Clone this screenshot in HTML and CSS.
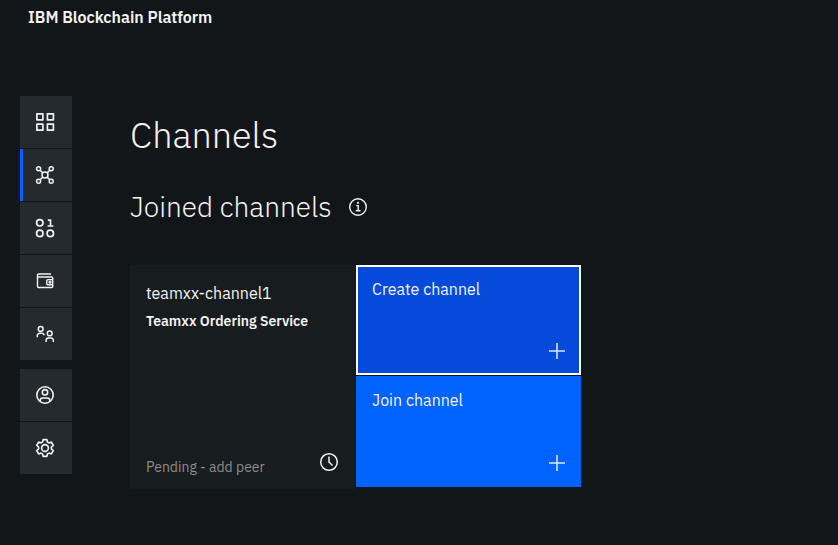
FILE: index.html
```html
<!DOCTYPE html>
<html lang="en">
<head>
<meta charset="utf-8">
<title>IBM Blockchain Platform</title>
<meta name="viewport" content="width=device-width, initial-scale=1">
<link rel="stylesheet" href="styles.css">
</head>
<body>
<header class="header"><a class="brand" href="#">IBM Blockchain Platform</a></header>
<div class="shell">
  <nav class="sidebar" aria-label="Main">
    <div class="nav-group">
      <a class="nav-link" href="#" aria-label="Dashboard">
        <svg class="icon" viewBox="0 0 20 20" stroke-width="1.7"><path d="M1.9 1.8h6v6h-6zM12.4 1.8h6v6h-6zM1.9 12.2h6v6h-6zM12.4 12.2h6v6h-6z" stroke-linejoin="round"/></svg>
      </a>
      <a class="nav-link active" href="#" aria-label="Channels" aria-current="page">
        <svg class="icon" viewBox="0 0 20 20" stroke-width="1.5"><circle cx="10" cy="10" r="3"/><circle cx="3.6" cy="3.8" r="2"/><circle cx="16.2" cy="3.8" r="2"/><circle cx="3.6" cy="16.2" r="2"/><circle cx="16.2" cy="16.2" r="2"/><path d="M5 5.2l2.9 2.7M14.8 5.2l-2.7 2.7M5 14.8l2.9-2.7M14.8 14.8l-2.7-2.7"/></svg>
      </a>
      <a class="nav-link" href="#" aria-label="Smart contracts">
        <svg class="icon" viewBox="0 0 20 20" stroke-width="1.7"><circle cx="4.8" cy="4.8" r="3.2"/><circle cx="4.8" cy="15.4" r="3.2"/><circle cx="15.3" cy="15.4" r="3.2"/><path d="M12.8 2.2h2.7v5.8M12.6 8h5.8"/></svg>
      </a>
      <a class="nav-link" href="#" aria-label="Wallet">
        <svg class="icon" viewBox="0 0 20 20" stroke-width="1.4"><path d="M16 3H3.5a1 1 0 0 0-1 1v11.5a1 1 0 0 0 1 1h13.2a1 1 0 0 0 1-1V7a1 1 0 0 0-1-1H2.5M17.7 8.6h-4.9a1 1 0 0 0-1 1v3.2a1 1 0 0 0 1 1h4.9"/><circle cx="15" cy="11.2" r=".9"/></svg>
      </a>
      <a class="nav-link" href="#" aria-label="Organizations">
        <svg class="icon" viewBox="0 0 20 20" stroke-width="1.5"><circle cx="5.7" cy="4.9" r="2.4"/><path d="M2.3 13.3v-1.7a2.3 2.3 0 0 1 2.3-2.3H7a2.3 2.3 0 0 1 2.2 2"/><circle cx="14.7" cy="9.4" r="2.4"/><path d="M11.1 17.9v-1.7a2.3 2.3 0 0 1 2.3-2.3H16a2.3 2.3 0 0 1 2.3 2.3v1.7"/></svg>
      </a>
    </div>
    <div class="nav-group">
      <a class="nav-link" href="#" aria-label="Users">
        <svg class="icon" viewBox="0 0 20 20" stroke-width="1.6"><circle cx="10" cy="10" r="8.2"/><circle cx="10" cy="7.3" r="2.7"/><path d="M5.2 16.5v-1a2.5 2.5 0 0 1 2.5-2.5h4.6a2.5 2.5 0 0 1 2.5 2.5v1"/></svg>
      </a>
      <a class="nav-link" href="#" aria-label="Settings">
        <svg class="icon" viewBox="0 0 20 20" stroke-width="1.6" stroke-linejoin="round"><circle cx="10" cy="10" r="3.4"/><path d="M8.1 1.6h3.8l.5 2.4 1.6.9 2.4-.8 1.9 3.3-1.9 1.6v2l1.9 1.6-1.9 3.3-2.4-.8-1.6.9-.5 2.4H8.1L7.6 16 6 15.1l-2.4.8-1.9-3.3L3.6 11V9L1.7 7.4l1.9-3.3 2.4.8L7.6 4z"/></svg>
      </a>
    </div>
  </nav>
  <main class="content">
    <h1 class="title">Channels</h1>
    <div class="section-head">
      <h2 class="subtitle">Joined channels</h2>
      <button class="info" type="button" aria-label="About joined channels">
        <svg class="icon" viewBox="0 0 20 20" stroke-width="1.4"><circle cx="10" cy="10" r="8.3"/><path d="M8.2 8.6h2v5M7.7 13.7h4.8"/><circle cx="10" cy="5.9" r=".4"/></svg>
      </button>
    </div>
    <div class="tiles">
      <article class="channel">
        <h3 class="channel-name">teamxx-channel1</h3>
        <p class="channel-service">Teamxx Ordering Service</p>
        <div class="channel-status">
          <span class="status-text">Pending - add peer</span>
          <svg class="icon" viewBox="0 0 20 20" stroke-width="1.5" aria-hidden="true"><circle cx="10" cy="10" r="8.3"/><path d="M10 4.5V10l3.5 3.5"/></svg>
        </div>
      </article>
      <div class="actions">
        <button class="action focused" type="button"><span>Create channel</span>
          <svg class="plus" viewBox="0 0 16 16" aria-hidden="true"><path d="M8 0v16M0 8h16"/></svg>
        </button>
        <button class="action" type="button"><span>Join channel</span>
          <svg class="plus" viewBox="0 0 16 16" aria-hidden="true"><path d="M8 0v16M0 8h16"/></svg>
        </button>
      </div>
    </div>
  </main>
</div>
</body>
</html>
```
FILE: styles.css
```css
* { box-sizing: border-box; }
body {
  margin: 0;
  min-height: 100vh;
  background: #121619;
  color: #f3f3f3;
  font-family: "IBM Plex Sans", Roboto, "Liberation Sans", sans-serif;
  font-size: 16px;
  line-height: 24px;
}
h1, h2, h3, p { margin: 0; }
a { color: inherit; text-decoration: none; }
button { padding: 0; border: 0; font: inherit; color: inherit; text-align: left; cursor: pointer; }
.icon { display: block; width: 20px; height: 20px; fill: none; stroke: #f3f3f3; }
.header { height: 96px; padding: 5px 28px; }
.brand { font-weight: 600; }
.shell { display: flex; align-items: flex-start; gap: 58px; padding: 0 20px; }
.sidebar { display: grid; gap: 9px; flex: none; }
.nav-group { display: grid; gap: 1px; }
.nav-link {
  display: flex;
  align-items: center;
  width: 52px;
  height: 52px;
  padding-left: 12px;
  border-left: 3px solid transparent;
  background: #242a2e;
}
.nav-link.active { border-left-color: #0062ff; }
.content { flex: 1; padding-top: 15px; }
.title { font-size: 36px; line-height: 48px; font-weight: 300; }
.section-head { display: flex; align-items: center; gap: 16px; margin-top: 28px; }
.subtitle { font-size: 28px; line-height: 40px; font-weight: 300; }
.info { background: none; }
.tiles { display: grid; grid-template-columns: 225px 225px; gap: 1px; align-items: start; margin-top: 38px; }
.channel { display: flex; flex-direction: column; min-height: 224px; padding: 16px 16px 10px; background: #171c1e; }
.channel-name { font-size: 16px; line-height: 24px; font-weight: 400; }
.channel-service { margin-top: 4px; font-size: 14px; font-weight: 600; }
.channel-status {
  display: flex;
  justify-content: space-between;
  align-items: flex-start;
  margin-top: auto;
  color: #8d8d8d;
  font-size: 14px;
}
.status-text { padding-top: 3px; }
.actions { display: grid; gap: 1px; }
.action {
  display: flex;
  flex-direction: column;
  justify-content: space-between;
  height: 111px;
  padding: 12px 16px 16px;
  background: #0062ff;
}
.action.focused { height: 110px; background: #054ada; box-shadow: inset 0 0 0 2px #fff; }
.plus { width: 16px; height: 16px; align-self: flex-end; fill: none; stroke: #dce8ff; stroke-width: 1.6; }
```
